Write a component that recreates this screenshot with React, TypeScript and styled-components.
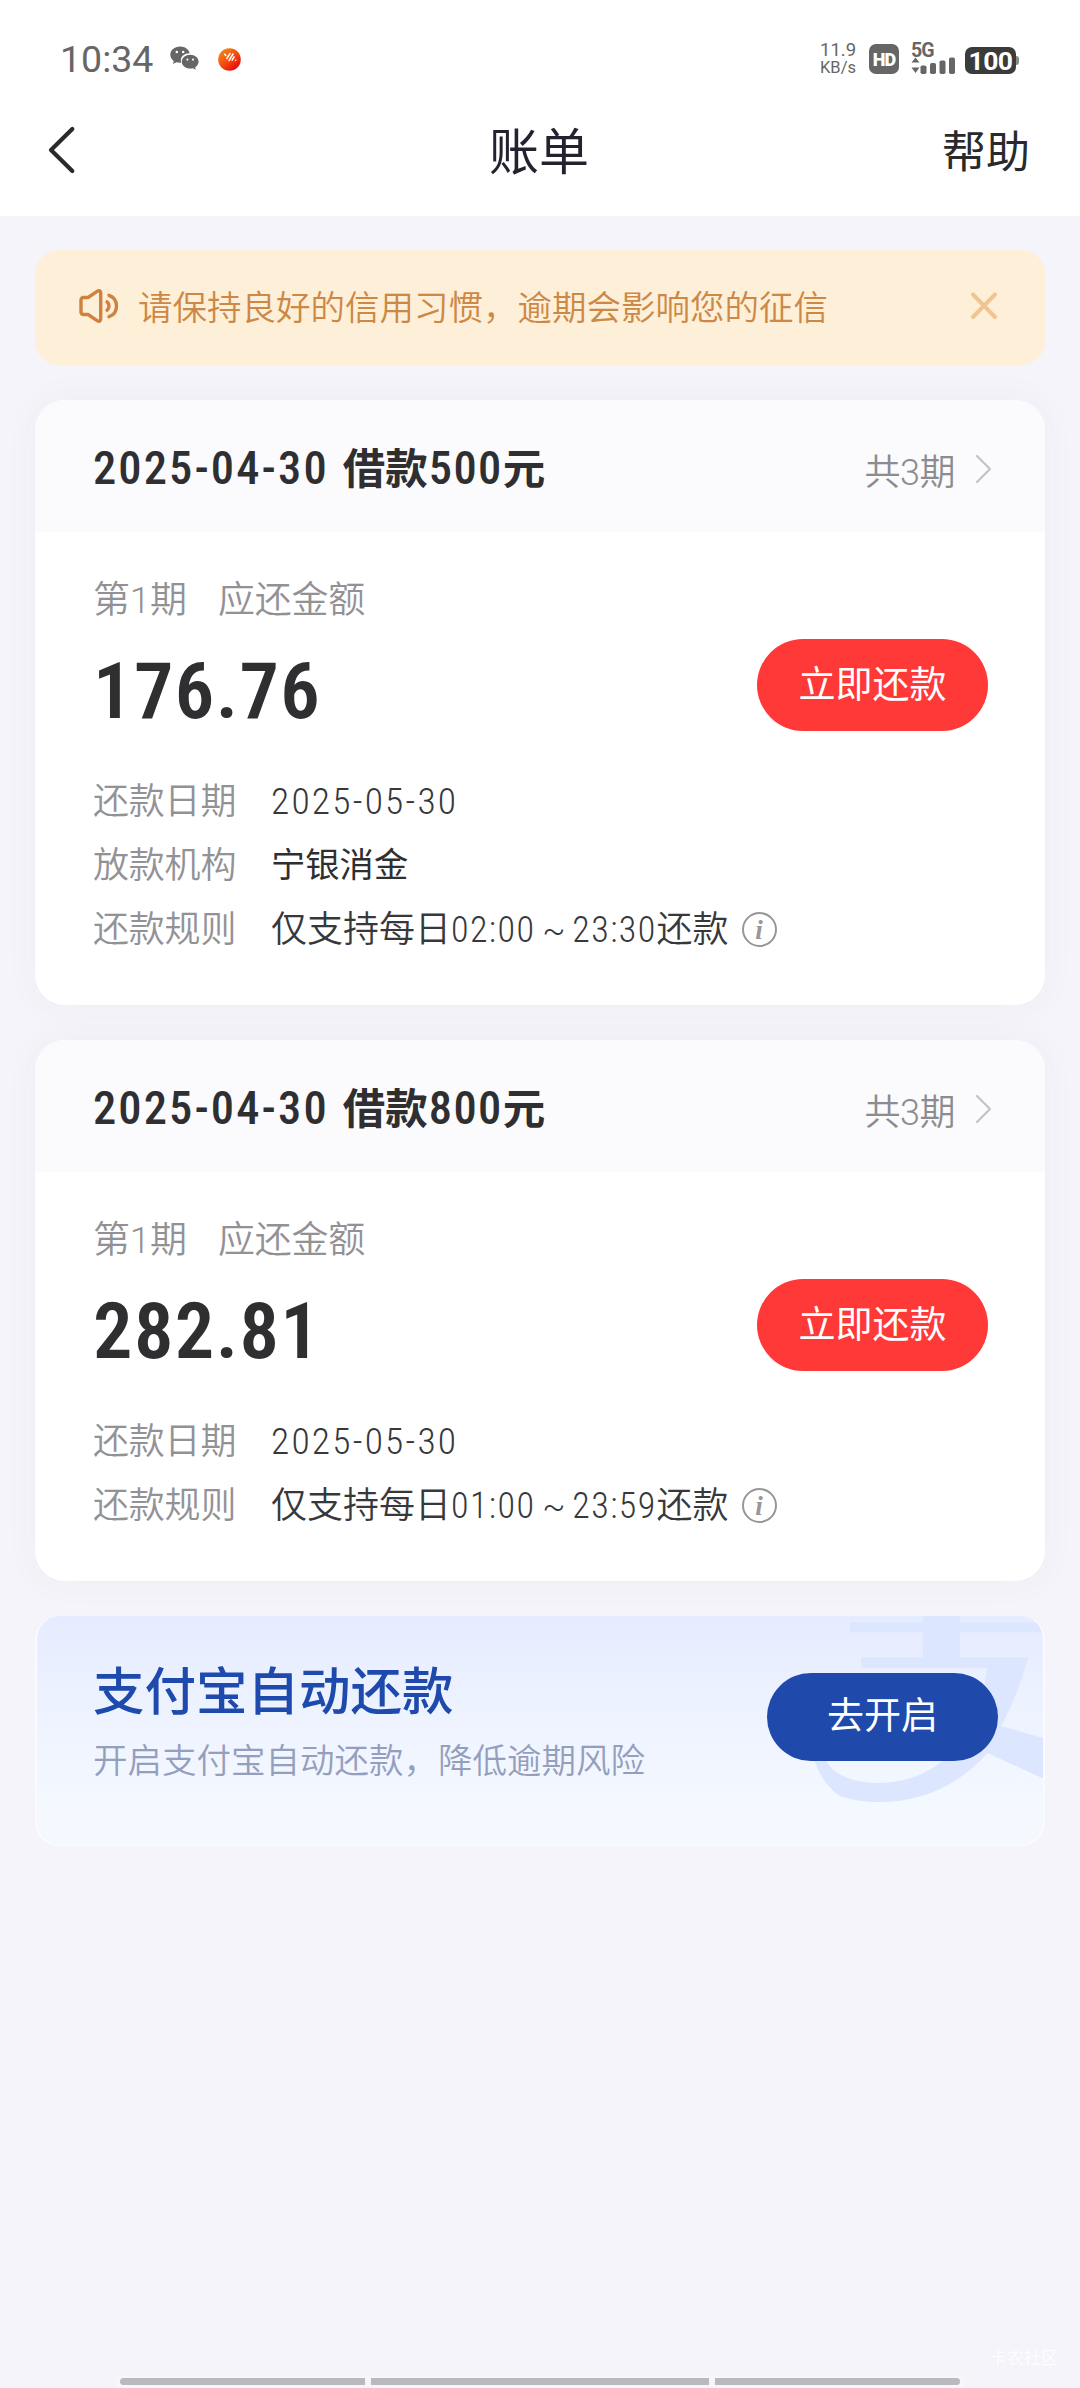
import React from 'react';
import styled, { createGlobalStyle } from 'styled-components';

const GlobalStyle = createGlobalStyle`
  * { box-sizing: border-box; }
  html, body { margin: 0; padding: 0; background: #f4f4fa; }
  body { font-family: Roboto, "Noto Sans CJK SC", sans-serif; color: #2f2f31; }
  button { font: inherit; border: 0; padding: 0; background: none; }
`;

const Page = styled.div`
  width: 1080px;
  height: 2388px;
  display: flex;
  flex-direction: column;
  background: #f4f4fa;
  overflow: hidden;
`;

/* ---------- status bar ---------- */

const StatusBar = styled.div`
  height: 84px;
  padding: 36px 61px 0 60px;
  display: flex;
  justify-content: space-between;
  background: #fff;
  color: #666;
`;

const StatusGroup = styled.div`
  height: 46px;
  display: flex;
  align-items: center;
`;

const Clock = styled.span`
  font-size: 37.5px;
  line-height: 48px;
  width: 110px;
`;

const AppIcons = styled.div`
  display: flex;
  align-items: center;
  gap: 19px;
`;

const NetSpeed = styled.div`
  width: 49px;
  display: flex;
  flex-direction: column;
  font-size: 18.5px;
  line-height: 17px;
  & > span:last-child { font-size: 16.5px; }
`;

const HdBadge = styled.div`
  width: 30px;
  height: 30px;
  border-radius: 7px;
  margin-right: 12px;
  background: #666;
  color: #fff;
  display: flex;
  align-items: center;
  justify-content: center;
  font-size: 18px;
  font-weight: 900;
  letter-spacing: -1px;
`;

const Signal = styled.div`
  width: 54px;
  height: 30px;
  display: flex;
  flex-direction: column;
  justify-content: space-between;
  & > span { font-size: 19.5px; font-weight: 700; line-height: 14px; letter-spacing: -1px; }
  & > svg { margin-top: -2px; }
`;

const Battery = styled.div`
  display: flex;
  align-items: center;
  margin-top: 3px;
`;

const BatteryBody = styled.div`
  width: 51px;
  height: 27px;
  border-radius: 7px;
  background: #3b3b3b;
  color: #fff;
  font-size: 26.5px;
  font-weight: 700;
  line-height: 28px;
  text-align: center;
  letter-spacing: -0.5px;
`;

const BatteryTip = styled.div`
  width: 3px;
  height: 9px;
  border-radius: 0 3px 3px 0;
  background: #8a8a8a;
`;

/* ---------- navigation ---------- */

const NavBar = styled.header`
  height: 132px;
  padding: 0 50px 0 46px;
  display: grid;
  grid-template-columns: 1fr auto 1fr;
  align-items: center;
  background: #fff;
`;

const BackButton = styled.button`
  display: flex;
  width: 32px;
`;

const Title = styled.h1`
  margin: 0 0 0 2px;
  padding-top: 7px;
  font-size: 50px;
  font-weight: 400;
  line-height: 125px;
  color: #232330;
`;

const HelpLink = styled.span`
  justify-self: end;
  padding-top: 7px;
  font-size: 44px;
  line-height: 125px;
  color: #2a2a2c;
`;

/* ---------- content ---------- */

const Content = styled.main`
  flex: 1;
  padding: 34px 35px 0;
  display: flex;
  flex-direction: column;
  gap: 35px;
`;

const Notice = styled.section`
  height: 115px;
  flex: none;
  padding: 0 46px 0 43px;
  border-radius: 24px;
  background: #feefd8;
  display: flex;
  align-items: center;
  color: #cc8844;
  & > svg { margin-bottom: 4px; }
`;

const NoticeText = styled.span`
  flex: 1;
  margin-left: 18px;
  padding-top: 2px;
  font-size: 34.5px;
  font-weight: 350;
  line-height: 113px;
`;

const Card = styled.section`
  flex: none;
  border-radius: 30px;
  background: #fff;
  overflow: hidden;
  box-shadow: 0 0 36px rgba(70, 60, 100, 0.045);
`;

const CardHead = styled.div`
  height: 132px;
  padding: 0 53px 0 58px;
  background: #fbfbfd;
  display: flex;
  align-items: center;
  justify-content: space-between;
`;

const LoanTitle = styled.h2`
  margin: 0;
  padding-top: 6px;
  line-height: 60px;
  font-size: 46.5px;
  font-weight: 500;
  white-space: nowrap;
`;

const LoanCjk = styled.span<{ $before?: number; $after?: number }>`
  font-size: 42.5px;
  font-weight: 700;
  margin-left: ${(p) => p.$before ?? 0}px;
  margin-right: ${(p) => p.$after ?? 0}px;
`;

const NarrowDigits = styled.span<{ $tracking: number }>`
  font-stretch: 85%;
  letter-spacing: ${(p) => p.$tracking}px;
`;

const Periods = styled.div`
  display: flex;
  align-items: center;
  gap: 20px;
  padding-top: 14px;
  font-size: 36px;
  font-weight: 350;
  line-height: 50px;
  letter-spacing: -0.5px;
  color: #8c8c90;
  & > svg { margin-top: -9px; }
`;

const CardBody = styled.div`
  padding: 40px 57px 43px 58px;
`;

const DueLabel = styled.div`
  display: flex;
  gap: 31px;
  height: 58px;
  font-size: 37px;
  font-weight: 350;
  line-height: 58px;
  letter-spacing: -0.2px;
  color: #929296;
`;

const DueRow = styled.div`
  height: 92px;
  margin-top: 9px;
  display: flex;
  justify-content: space-between;
`;

const Amount = styled.div`
  font-size: 78.5px;
  font-weight: 560;
  font-stretch: 85%;
  line-height: 104px;
  letter-spacing: 1.4px;
`;

const PayButton = styled.button`
  width: 231px;
  height: 92px;
  border-radius: 46px;
  background: #ff3938;
  color: #fff;
  font-size: 37px;
  line-height: 94px;
`;

const Details = styled.dl`
  margin: 38px 0 0;
`;

const DetailRow = styled.div<{ $height: number }>`
  height: ${(p) => p.$height}px;
  display: flex;
  align-items: center;
  font-size: 36px;
  line-height: 56px;
`;

const DetailName = styled.dt`
  width: 178px;
  padding-top: 1px;
  font-weight: 350;
  letter-spacing: -0.2px;
  color: #929296;
`;

const DetailValue = styled.dd<{ $size?: number; $light?: boolean }>`
  margin: 0;
  display: flex;
  align-items: center;
  font-size: ${(p) => p.$size ?? 36}px;
  font-weight: ${(p) => (p.$light ? 350 : 400)};
  color: ${(p) => (p.$light ? '#38383a' : '#2f2f31')};
`;

const Tilde = styled.span`
  display: inline-block;
  width: 37px;
  text-align: center;
  font-size: 34px;
`;

const InfoBadge = styled.span`
  width: 35px;
  height: 35px;
  margin: 0 0 0 13px;
  border: 2.5px solid #97979a;
  border-radius: 50%;
  display: flex;
  align-items: center;
  justify-content: center;
  font: italic 700 27px/30px "Liberation Serif", serif;
  color: #97979a;
`;

/* ---------- auto-repay banner ---------- */

const Banner = styled.section`
  position: relative;
  flex: none;
  height: 230px;
  padding: 0 45px 0 56px;
  border: 2px solid #f9fbff;
  border-top: 0;
  border-radius: 24px;
  overflow: hidden;
  background: linear-gradient(180deg, #e6ecff 0%, #f5f9ff 85%);
  display: flex;
  justify-content: space-between;
`;

const BannerMark = styled.svg`
  position: absolute;
  top: 0;
  right: 0;
`;

const BannerCopy = styled.div`
  padding-top: 39px;
`;

const BannerTitle = styled.h3`
  margin: 0;
  font-size: 51.5px;
  font-weight: 500;
  line-height: 76px;
  color: #1f4aad;
`;

const BannerText = styled.p`
  margin: 0;
  font-size: 34.5px;
  font-weight: 350;
  line-height: 60px;
  color: #949fbd;
`;

const BannerButton = styled.button`
  position: relative;
  width: 231px;
  height: 88px;
  margin-top: 57px;
  border-radius: 44px;
  background: #1f49aa;
  color: #fff;
  font-size: 37px;
  line-height: 84px;
`;

/* ---------- bottom ---------- */

const Footer = styled.footer`
  flex: none;
  display: flex;
  flex-direction: column;
`;

const Community = styled.span`
  align-self: flex-end;
  margin: 0 22px 9px 0;
  font-size: 17px;
  line-height: 22px;
  color: #fdfdff;
`;

const GestureBar = styled.div`
  margin: 0 120px 3px;
  height: 7px;
  display: grid;
  grid-template-columns: 245px 338px 245px;
  gap: 6px;
  box-shadow: 0 0 0 3px #f7f7f9;
`;

const GestureSegment = styled.div<{ $side?: 'left' | 'right' }>`
  background: #b9babd;
  border-radius: ${(p) =>
    p.$side === 'left' ? '4px 0 0 4px' : p.$side === 'right' ? '0 4px 4px 0' : '0'};
`;

/* ---------- icons ---------- */

const WeChatIcon = () => (
  <svg width="29" height="26" viewBox="0 0 29 26" fill="#666">
    <path d="M10 0.6C4.5 0.6 0.3 4.2 0.3 8.8c0 2.6 1.400 4.800 3.500 6.300l-.9 3 3.500-1.800c1.200.3 2.400.5 3.600.5.4 0 .8 0 1.200-.1-.2-.7-.4-1.400-.4-2.200 0-4.100 3.800-7.200 8.400-7.200h.4C18.900 3.500 14.900.6 10 .6z" />
    <path d="M28.600 15.700c0-3.800-3.800-6.900-8.400-6.900s-8.400 3.100-8.400 6.900 3.800 6.900 8.400 6.900c1 0 1.900-.1 2.800-.4l2.900 1.600-.8-2.600c2.100-1.300 3.500-3.300 3.500-5.500z" />
    <g fill="#fff">
      <circle cx="6.800" cy="6" r="1.250" />
      <circle cx="13.200" cy="6" r="1.250" />
      <circle cx="17.400" cy="13.600" r="1.050" />
      <circle cx="23" cy="13.600" r="1.050" />
    </g>
  </svg>
);

const LoanAppIcon = () => (
  <svg width="23" height="23" viewBox="0 0 23 23">
    <defs>
      <linearGradient id="orb" x1="0" y1="0" x2="0.8" y2="1">
        <stop offset="0.1" stopColor="#f58a17" />
        <stop offset="0.6" stopColor="#f4430f" />
        <stop offset="1" stopColor="#e6000f" />
      </linearGradient>
    </defs>
    <circle cx="11.500" cy="11.500" r="11.300" fill="url(#orb)" />
    <g stroke="#fff" strokeWidth="1.500" strokeLinecap="round" fill="none">
      <path d="M6.800 6.200l1 1.200" />
      <path d="M12 5.500L8.800 10.500" />
      <path d="M15 6L11 12.700" />
      <path d="M16 9l-1.900 3.200" />
      <path d="M17.600 12.200h.1" />
    </g>
  </svg>
);

const SignalIcon = () => (
  <svg width="46" height="18" viewBox="0 0 46 18" fill="#666">
    <path d="M4.500 1.500L8.500 6.500h-8zM.5 11.500h8L4.500 17z" />
    <rect x="9.500" y="9.500" width="6" height="8.500" rx="1.800" />
    <rect x="19" y="7" width="6" height="11" rx="1.800" />
    <rect x="28.500" y="4.500" width="6" height="13.500" rx="1.800" />
    <rect x="38" y="1.500" width="6" height="16.500" rx="1.800" />
  </svg>
);

const BackIcon = () => (
  <svg width="32" height="50" viewBox="0 0 32 50" fill="none" stroke="#2a2a2c" strokeWidth="4.200" strokeLinecap="round" strokeLinejoin="round">
    <path d="M26.300 4L5 25l21.300 21" />
  </svg>
);

const SpeakerIcon = () => (
  <svg width="42" height="36" viewBox="0 0 42 36" fill="none" stroke="#cf8240" strokeWidth="3.400" strokeLinecap="round" strokeLinejoin="round">
    <path d="M5.500 9.500H10L19.500 3.200c1.500-1 3.200-.4 3.200 1.500v26.600c0 1.900-1.700 2.500-3.200 1.500L10 26.500H5.500C4 26.500 3 25.500 3 24V12c0-1.500 1-2.500 2.500-2.500z" />
    <path d="M29 13.800c2.700 2.400 2.700 6 0 8.400" />
    <path d="M31 7.300c10 3.400 10 18 0 21.400" />
  </svg>
);

const CloseIcon = () => (
  <svg width="30" height="30" viewBox="0 0 30 30" fill="none" stroke="#f1c592" strokeWidth="4" strokeLinecap="round">
    <path d="M4 3.500L26 26M26 3.500L4 26" />
  </svg>
);

const ChevronIcon = () => (
  <svg width="17" height="32" viewBox="0 0 17 32" fill="none" stroke="#c3c3c6" strokeWidth="2.200" strokeLinecap="round" strokeLinejoin="round">
    <path d="M2 3l13 13L2 29" />
  </svg>
);

/* ---------- data ---------- */

interface Loan {
  date: string;
  principal: string;
  amount: string;
  due: string;
  lender?: string;
  from: string;
  to: string;
}

const loans: Loan[] = [
  { date: '2025-04-30', principal: '500', amount: '176.76', due: '2025-05-30', lender: '宁银消金', from: '02:00', to: '23:30' },
  { date: '2025-04-30', principal: '800', amount: '282.81', due: '2025-05-30', from: '01:00', to: '23:59' },
];

const LoanCard = ({ loan }: { loan: Loan }) => (
  <Card>
    <CardHead>
      <LoanTitle>
        <NarrowDigits $tracking={2.1}>{loan.date}</NarrowDigits>
        <LoanCjk $before={14} $after={1}>借款</LoanCjk>
        <NarrowDigits $tracking={1.4}>{loan.principal}</NarrowDigits>
        <LoanCjk>元</LoanCjk>
      </LoanTitle>
      <Periods>
        <span>共3期</span>
        <ChevronIcon />
      </Periods>
    </CardHead>
    <CardBody>
      <DueLabel>
        <span>第1期</span>
        <span>应还金额</span>
      </DueLabel>
      <DueRow>
        <Amount>{loan.amount}</Amount>
        <PayButton>立即还款</PayButton>
      </DueRow>
      <Details>
        <DetailRow $height={64}>
          <DetailName>还款日期</DetailName>
          <DetailValue $size={37.5} $light>
            <NarrowDigits $tracking={2.2}>{loan.due}</NarrowDigits>
          </DetailValue>
        </DetailRow>
        {loan.lender && (
          <DetailRow $height={64}>
            <DetailName>放款机构</DetailName>
            <DetailValue $size={34.3}>{loan.lender}</DetailValue>
          </DetailRow>
        )}
        <DetailRow $height={65}>
          <DetailName>还款规则</DetailName>
          <DetailValue $light>
            <span>
              仅支持每日
              <NarrowDigits $tracking={1.4}>{loan.from}</NarrowDigits>
              <Tilde>~</Tilde>
              <NarrowDigits $tracking={1.4}>{loan.to}</NarrowDigits>
              还款
            </span>
            <InfoBadge>i</InfoBadge>
          </DetailValue>
        </DetailRow>
      </Details>
    </CardBody>
  </Card>
);

export default function App() {
  return (
    <Page>
      <GlobalStyle />
      <StatusBar>
        <StatusGroup>
          <Clock>10:34</Clock>
          <AppIcons>
            <WeChatIcon />
            <LoanAppIcon />
          </AppIcons>
        </StatusGroup>
        <StatusGroup>
          <NetSpeed>
            <span>11.9</span>
            <span>KB/s</span>
          </NetSpeed>
          <HdBadge>HD</HdBadge>
          <Signal>
            <span>5G</span>
            <SignalIcon />
          </Signal>
          <Battery>
            <BatteryBody>100</BatteryBody>
            <BatteryTip />
          </Battery>
        </StatusGroup>
      </StatusBar>

      <NavBar>
        <BackButton aria-label="返回">
          <BackIcon />
        </BackButton>
        <Title>账单</Title>
        <HelpLink>帮助</HelpLink>
      </NavBar>

      <Content>
        <Notice>
          <SpeakerIcon />
          <NoticeText>请保持良好的信用习惯，逾期会影响您的征信</NoticeText>
          <CloseIcon />
        </Notice>

        {loans.map((loan) => (
          <LoanCard key={loan.principal} loan={loan} />
        ))}

        <Banner>
          <BannerMark width="240" height="230" viewBox="768 0 240 230" fill="#dce6fe">
            <path d="M815 6.300H1008V16.300H925V41.300H993.300C986 67 977 90 966 110L1008 122V162.500L952.500 137C925 168 888 186 845 186C830 186 818 184 807 181C794 174 785 160 780 146L776 120H788C789 130 790 140 792 146C800 160 820 167 845 167C875 166 905 155 925 125L905 118V110H937C944 92 950 72 952.300 51.700H826V41.300H887.700V16.300H815z" />
            <path d="M887.700 0H925V8H887.700z" />
          </BannerMark>
          <BannerCopy>
            <BannerTitle>支付宝自动还款</BannerTitle>
            <BannerText>开启支付宝自动还款，降低逾期风险</BannerText>
          </BannerCopy>
          <BannerButton>去开启</BannerButton>
        </Banner>
      </Content>

      <Footer>
        <Community>卡农社区</Community>
        <GestureBar>
          <GestureSegment $side="left" />
          <GestureSegment />
          <GestureSegment $side="right" />
        </GestureBar>
      </Footer>
    </Page>
  );
}
